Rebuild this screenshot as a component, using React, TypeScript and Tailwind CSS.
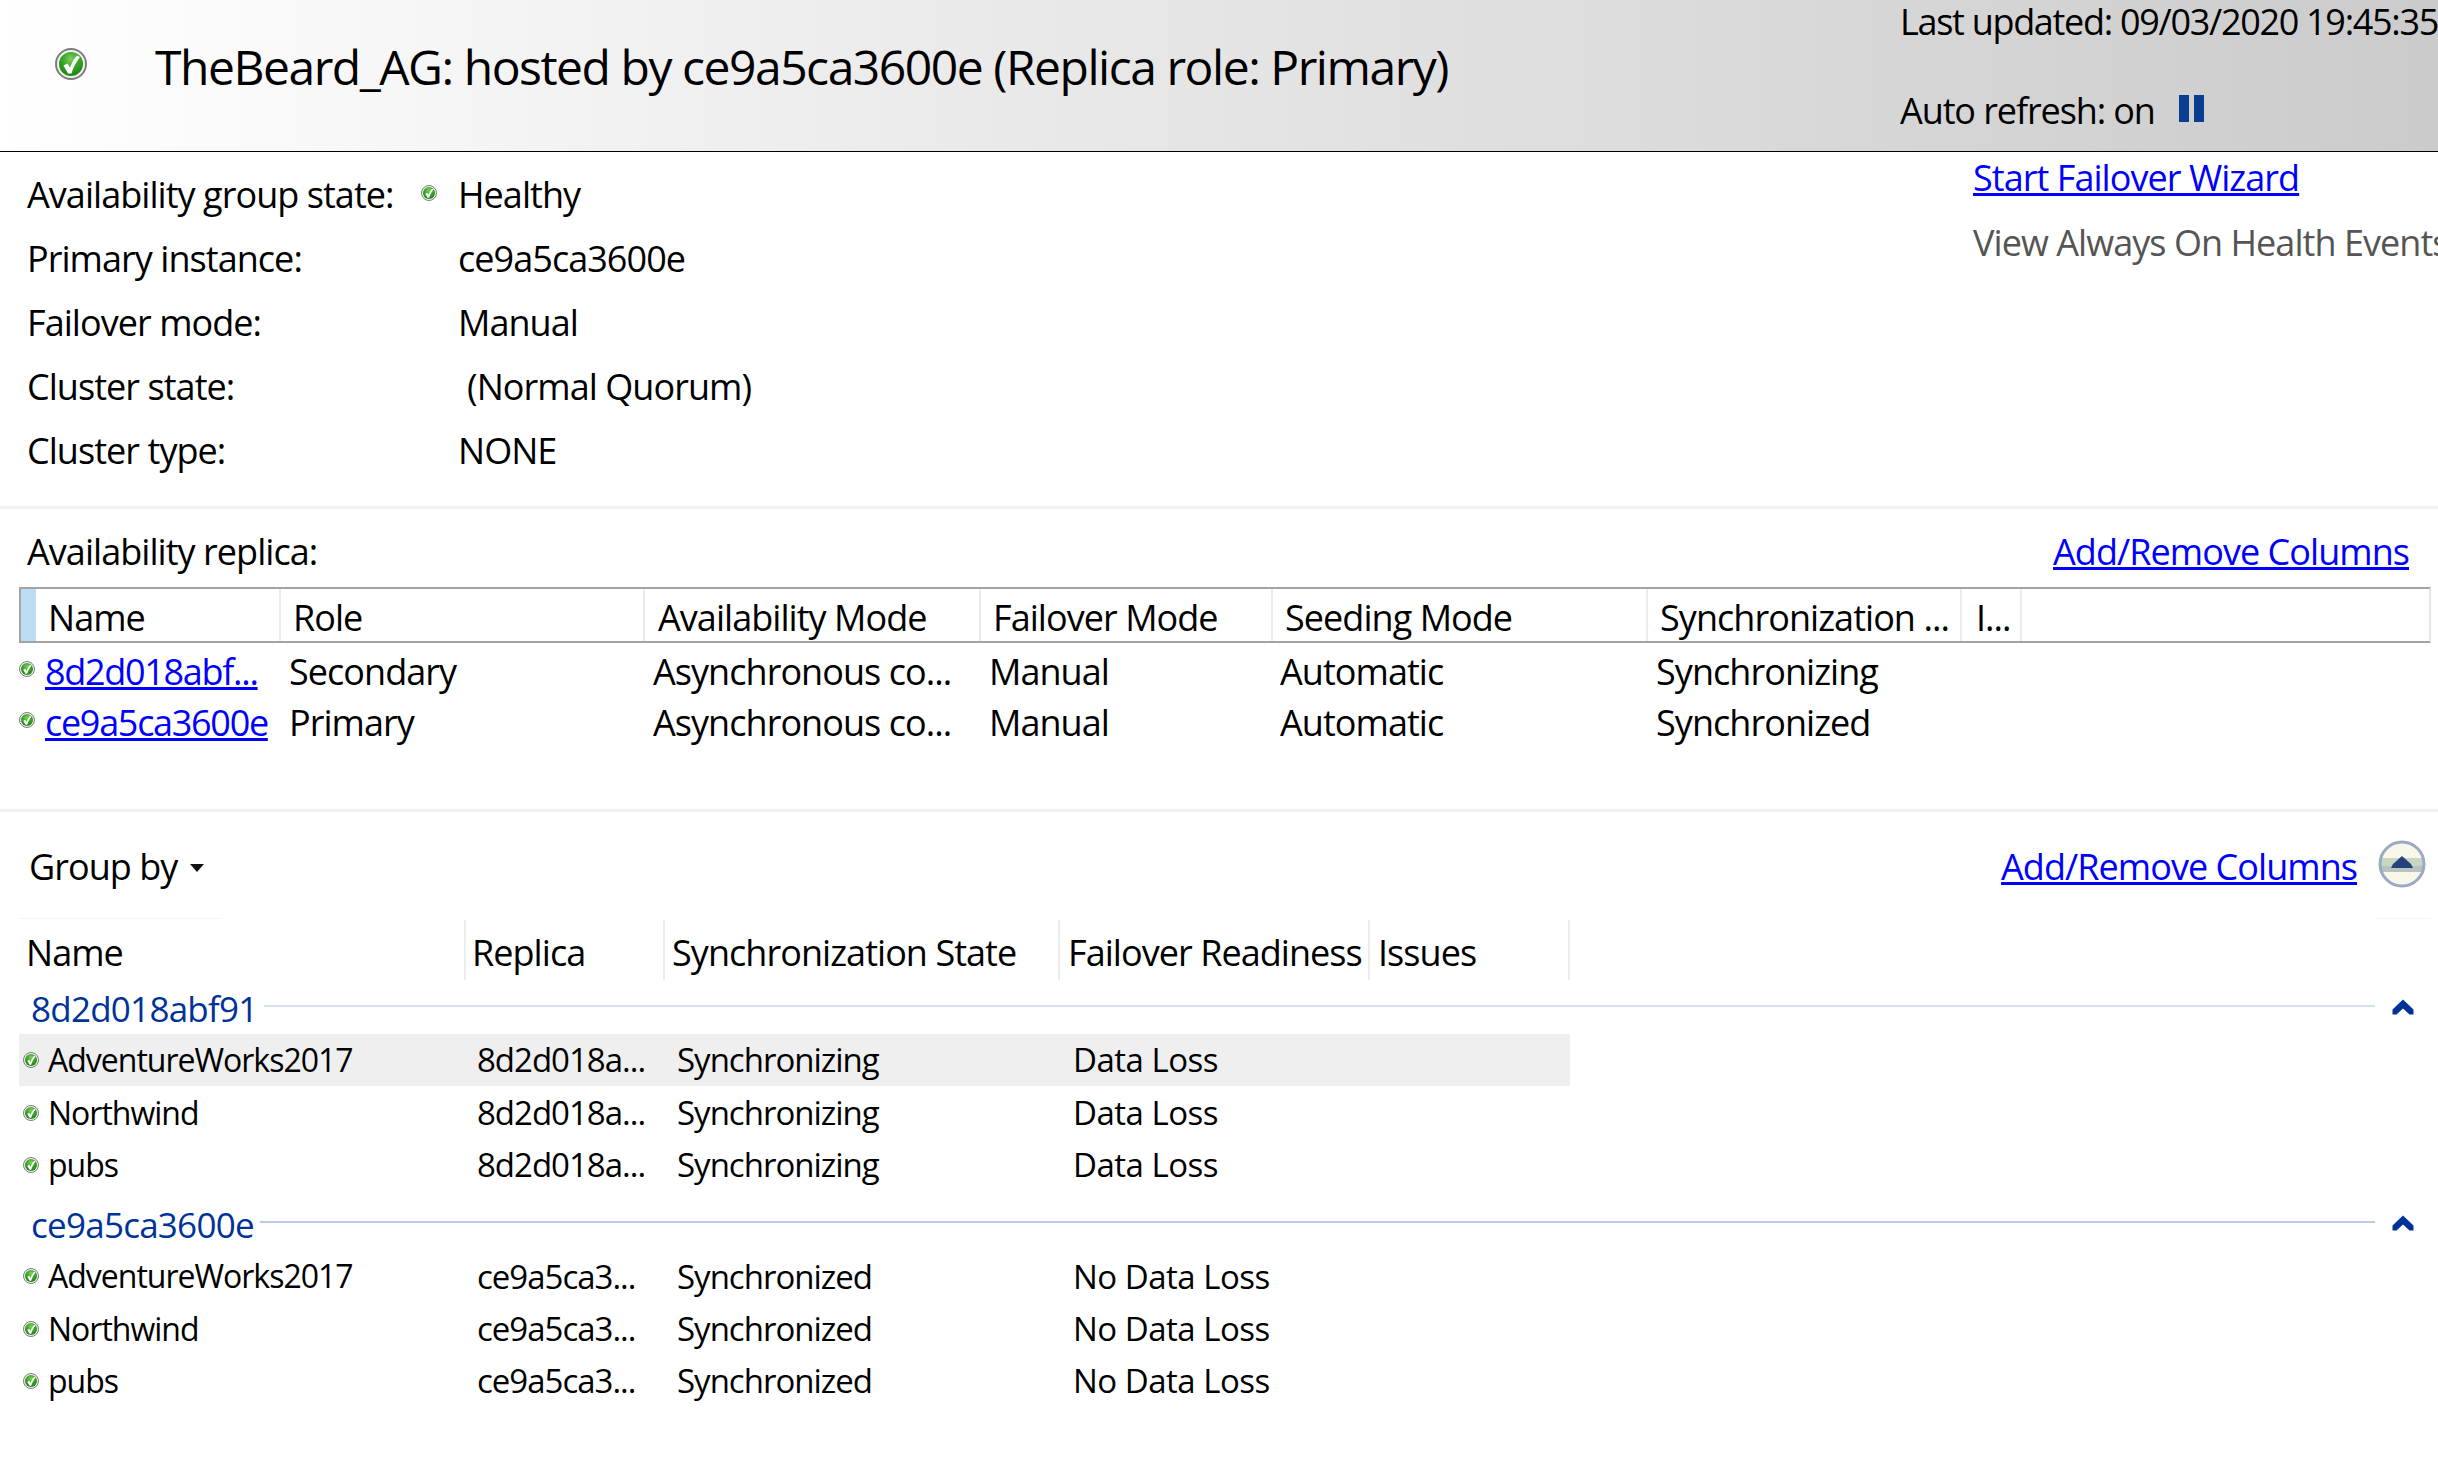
import React from "react";

const font = { fontFamily: '"Open Sans", sans-serif' };

function Ok({ s = 16 }: { s?: number }) {
  const id = "g" + s;
  return (
    <svg width={s} height={s} viewBox="0 0 32 32" className="shrink-0">
      <defs>
        <radialGradient id={id} cx="0.5" cy="0.3" r="0.75">
          <stop offset="0" stopColor="#7fd05f" />
          <stop offset="0.5" stopColor="#36a322" />
          <stop offset="1" stopColor="#14800c" />
        </radialGradient>
      </defs>
      <circle cx="16" cy="16" r="15" fill="#f2f2f2" stroke="#7d7d7d" strokeWidth="2" />
      <circle cx="16" cy="16" r="12" fill={`url(#${id})`} />
      <path d="M8.5 17.5 L12.5 15.5 L15 19.5 C17 14.5 19 10.5 22 7.5 L25 9 C21 14 18 20 16.5 25.5 L13 25.5 Z" fill="#fff" />
    </svg>
  );
}

function Chevron() {
  return (
    <svg width="22" height="16" viewBox="0 0 22 16" className="shrink-0">
      <path d="M11 0.5 L21.5 10.5 V15.5 H17.5 L11 9.5 L4.5 15.5 H0.5 V10.5 Z" fill="#003399" />
    </svg>
  );
}

const replicaCols = [
  { w: 'w-[245px]', pl: 'pl-[12px]', t: "Name" },
  { w: 'w-[364px]', pl: 'pl-[12px]', t: "Role" },
  { w: 'w-[336px]', pl: 'pl-[13px]', t: "Availability Mode" },
  { w: 'w-[292px]', pl: 'pl-[12px]', t: "Failover Mode" },
  { w: 'w-[375px]', pl: 'pl-[12px]', t: "Seeding Mode" },
  { w: 'w-[314px]', pl: 'pl-[12px]', t: "Synchronization ..." },
  { w: 'w-[60px]', pl: 'pl-[14px]', t: "I..." },
];

const replicaRows = [
  ["8d2d018abf...", "Secondary", "Asynchronous co...", "Manual", "Automatic", "Synchronizing"],
  ["ce9a5ca3600e", "Primary", "Asynchronous co...", "Manual", "Automatic", "Synchronized"],
];

const gridCols = [
  { w: 'w-[447px]', pl: 'pl-[7px]', t: "Name" },
  { w: 'w-[199px]', pl: 'pl-[6px]', t: "Replica" },
  { w: 'w-[395px]', pl: 'pl-[7px]', t: "Synchronization State" },
  { w: 'w-[310px]', pl: 'pl-[8px]', t: "Failover Readiness" },
  { w: 'w-[200px]', pl: 'pl-[8px]', t: "Issues" },
];

function Group({ name, replica, state, ready, first }: { name: string; replica: string; state: string; ready: string; first?: boolean }) {
  return (
    <div className={first ? "" : "mt-[5px]"}>
      <div className="h-[54px] flex items-center pl-[31px] pr-[24px]">
        <span className="text-[35px] text-[#003399] pt-[2px] leading-none tracking-[-0.75px]">{name}</span>
        <div className={`flex-1 h-[2px] ml-[6px] mr-[17px] mb-[2px] ${first ? "bg-[#d3e1f0]" : "bg-[#b9cbe9]"}`} />
        <Chevron />
      </div>
      {["AdventureWorks2017", "Northwind", "pubs"].map((db, i) => (
        <div key={db} className={`ml-[19px] w-[1551px] h-[52.4px] flex items-center text-[33px] tracking-[-1px] ${first && i === 0 ? "bg-[#efefef]" : ""}`}>
          <div className="w-[447px] flex items-center pl-[4px] gap-[9px] text-[32px]">
            <Ok />
            <span>{db}</span>
          </div>
          <div className="w-[199px] pl-[11px]">{replica}</div>
          <div className="w-[396px] pl-[12px]">{state}</div>
          <div className="pl-[12px] tracking-[-0.5px]">{ready}</div>
        </div>
      ))}
    </div>
  );
}

export default function App() {
  const info: [string, React.ReactNode, string?][] = [
    ["Availability group state:", "Healthy"],
    ["Primary instance:", "ce9a5ca3600e"],
    ["Failover mode:", "Manual"],
    ["Cluster state:", "(Normal Quorum)", "pl-[9px]"],
    ["Cluster type:", "NONE"],
  ];
  return (
    <div style={font} className="w-[2438px] h-[1467px] overflow-hidden bg-white text-black text-[36px] tracking-[-0.95px] whitespace-nowrap">
      <header className="h-[152px] border-b border-black bg-gradient-to-r from-white to-[#cbcbcb] flex">
        <div className="w-[155px] pl-[55px] pt-[48px]">
          <Ok s={32} />
        </div>
        <h1 className="w-[1745px] text-[48px] font-normal leading-none pt-[43px] tracking-[-1.47px]">
          TheBeard_AG: hosted by ce9a5ca3600e (Replica role: Primary)
        </h1>
        <div className="flex-1 overflow-hidden">
          <div className="h-[44px] flex items-center tracking-[-1.3px]">Last updated: 09/03/2020 19:45:35</div>
          <div className="mt-[45px] h-[44px] flex items-center tracking-[-1.1px]">
            Auto refresh: on
            <span className="ml-[24px] mb-[5px] flex gap-[5px]">
              <span className="w-[10px] h-[27px] bg-[#0a3d8f]" />
              <span className="w-[10px] h-[27px] bg-[#0a3d8f]" />
            </span>
          </div>
        </div>
      </header>

      <section className="h-[354px] flex border-b-[3px] border-[#f0f0f0] box-content">
        <div className="w-[1973px] pt-[11px] pl-[27px]">
          {info.map(([k, v, cls], i) => (
            <div key={k} className="h-[64px] flex items-center">
              <span className="w-[394px]">{k}</span>
              <span className="w-[37px] -mt-[4px]">{i === 0 && <Ok />}</span>
              <span className={cls}>{v}</span>
            </div>
          ))}
        </div>
        <div className="flex-1 overflow-hidden">
          <div className="h-[52px] flex items-center text-[#0000ff] underline">Start Failover Wizard</div>
          <div className="mt-[13px] h-[52px] flex items-center text-[#555555]">View Always On Health Events</div>
        </div>
      </section>

      <section className="h-[300px] border-b-[3px] border-[#f0f0f0] box-content">
        <div className="h-[78px] pt-[8px] px-[27px] flex items-center justify-between">
          <span>Availability replica:</span>
          <span className="text-[#0000ff] underline mr-[2px]">Add/Remove Columns</span>
        </div>
        <div className="ml-[19px] w-[2412px] h-[56px] border-y-2 border-[#a3a3a3] border-l-2 border-r-2 border-r-[#e5e5e5] border-l-[#a3a3a3] flex">
          <div className="w-[15px] bg-[#bcdcf4]" />
          {replicaCols.map((c) => (
            <div key={c.t} className={`${c.w} ${c.pl} border-r-2 border-[#ececec] flex items-center pt-[5px]`}>{c.t}</div>
          ))}
        </div>
        <div className="pt-[3px]">
          {replicaRows.map((r) => (
            <div key={r[0]} className="h-[51px] flex items-center ml-[19px]">
              <div className="w-[270px] flex items-center gap-[10px]">
                <span className="mb-[5px]"><Ok /></span>
                <span className="text-[#0000ff] underline tracking-[-1.3px]">{r[0]}</span>
              </div>
              <div className="w-[364px]">{r[1]}</div>
              <div className="w-[336px]">{r[2]}</div>
              <div className="w-[291px]">{r[3]}</div>
              <div className="w-[376px]">{r[4]}</div>
              <div>{r[5]}</div>
            </div>
          ))}
        </div>
      </section>

      <section>
        <div className="h-[106px] pl-[29px] pr-[12px] pt-[3px] flex items-center justify-between">
          <span className="flex items-center">
            Group by
            <svg width="14" height="8" viewBox="0 0 14 8" className="ml-[13px] mt-[2px]">
              <path d="M0 0 H14 L7 8 Z" fill="#111" />
            </svg>
          </span>
          <span className="flex items-center">
            <span className="text-[#0000ff] underline">Add/Remove Columns</span>
            <svg width="48" height="48" viewBox="0 0 48 48" className="ml-[21px] mb-[6px]">
              <defs>
                <clipPath id="upClip">
                  <circle cx="24" cy="24" r="22" />
                </clipPath>
              </defs>
              <circle cx="24" cy="24" r="22" fill="#f9f7ea" />
              <rect x="0" y="18" width="48" height="8" fill="#c5d8c0" clipPath="url(#upClip)" />
              <rect x="0" y="26" width="48" height="6" fill="#b9c2bf" clipPath="url(#upClip)" />
              <circle cx="24" cy="24" r="22" fill="none" stroke="#9aa9c6" strokeWidth="3" />
              <path d="M15 24 L24 16 L33 24 L35 28 H13 Z" fill="#26427e" />
            </svg>
          </span>
        </div>
        <div className="px-[7px] ml-[12px] flex justify-between h-[1px] mb-[1px]">
          <div className="w-[203px] bg-[#f3f5fd]" />
          <div className="w-[56px] bg-[#f3f5fd]" />
        </div>
        <div className="ml-[19px] h-[60px] flex">
          {gridCols.map((c) => (
            <div key={c.t} className={`${c.w} ${c.pl} border-r-2 border-[#ececec] flex items-center pt-[5px]`}>{c.t}</div>
          ))}
        </div>
        <Group first name="8d2d018abf91" replica="8d2d018a..." state="Synchronizing" ready="Data Loss" />
        <Group name="ce9a5ca3600e" replica="ce9a5ca3..." state="Synchronized" ready="No Data Loss" />
      </section>
    </div>
  );
}
